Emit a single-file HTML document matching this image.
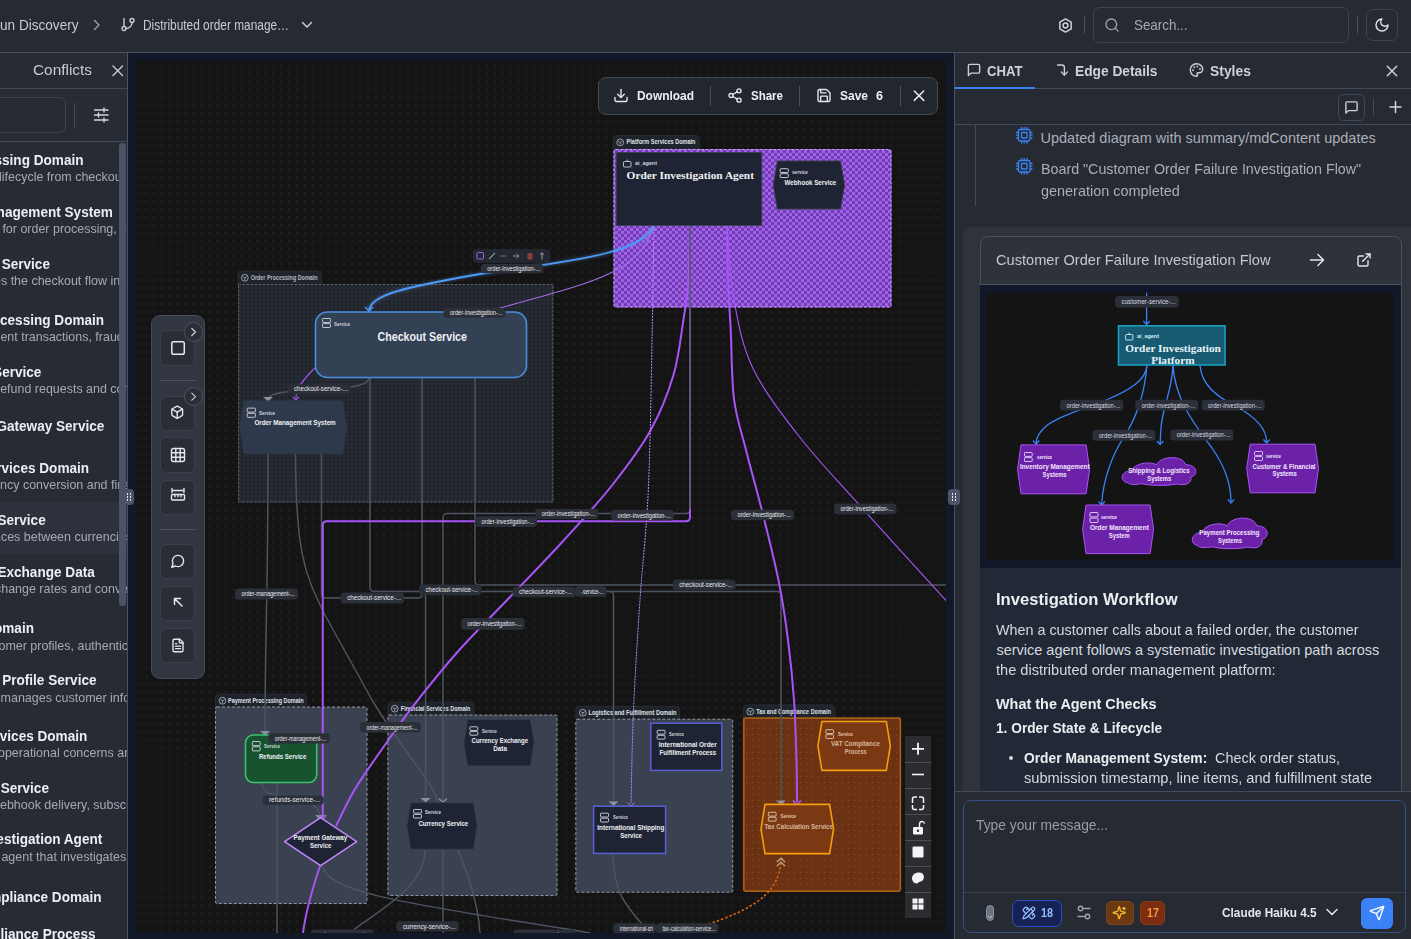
<!DOCTYPE html>
<html><head><meta charset="utf-8"><title>Canvas</title>
<style>*{box-sizing:border-box;margin:0;padding:0}
html,body{width:1411px;height:939px;overflow:hidden;background:#262a33;font-family:"Liberation Sans",sans-serif;color:#d1d5db}
.abs{position:absolute}
.t{position:absolute;white-space:nowrap;line-height:1;transform-origin:0 0}
#top{left:0;top:0;width:1411px;height:53px;background:#262a33;border-bottom:1px solid #4a5262}
#left{left:0;top:53px;width:128px;height:886px;background:#272b34;border-right:1px solid #4a5262;overflow:hidden}
#lefti{left:0;top:-53px;width:128px;height:939px}
#navy{left:128px;top:53px;width:826px;height:886px;background:#111827}
#canvas{left:136px;top:61px;width:810px;height:872px;background:#141414;overflow:hidden}
#canvi{left:-136px;top:-61px;width:1411px;height:939px}
#right{left:954px;top:53px;width:457px;height:886px;background:#262a33;border-left:1px solid #4a5262;overflow:hidden}
#righti{left:-955px;top:-53px;width:1411px;height:939px}
</style></head><body>
<div id="top" class="abs">
<div class="t" style="left:-0.50px;top:18.02px;font-size:14.5px;font-weight:400;color:#c7cbd3;font-family:'Liberation Sans',sans-serif;transform:scaleX(0.9366);">un Discovery</div>
<svg class="abs" style="left:0;top:0" width="1411" height="53" viewBox="0 0 1411 53" fill="none" stroke-linecap="round" stroke-linejoin="round">
<polyline points="94.5,20.5 99,25 94.5,29.5" stroke="#9ca3af" stroke-width="1.4"/>
<g transform="translate(120,16.5) scale(0.6667)" stroke="#c7cbd3" stroke-width="2.1"><line x1="6" x2="6" y1="3" y2="15"/><circle cx="18" cy="6" r="3"/><circle cx="6" cy="18" r="3"/><path d="M18 9a9 9 0 0 1-9 9"/></g>
<polyline points="302.5,22.5 307,27 311.5,22.5" stroke="#c7cbd3" stroke-width="1.5"/>
<g transform="translate(1057.5,17.5) scale(0.6667)" stroke="#d1d5db" stroke-width="2.2"><path d="M12 2.2 20.5 7.1v9.8L12 21.8 3.5 16.9V7.1z"/><circle cx="12" cy="12" r="3.6"/></g>
<line x1="1084.5" y1="17" x2="1084.5" y2="33" stroke="#4a5262" stroke-width="1"/>
<rect x="1093.5" y="7.5" width="255" height="35" rx="6" stroke="#3e4451" stroke-width="1"/>
<g transform="translate(1104,17) scale(0.6667)" stroke="#9ca3af" stroke-width="2"><circle cx="11" cy="11" r="8"/><path d="m21 21-4.3-4.3"/></g>
<line x1="1357.5" y1="17" x2="1357.5" y2="33" stroke="#4a5262" stroke-width="1"/>
<rect x="1366.5" y="9.5" width="31" height="31" rx="6" stroke="#3e4451" stroke-width="1"/>
<g transform="translate(1374,17) scale(0.6667)" stroke="#e5e7eb" stroke-width="2.1"><path d="M12 3a6 6 0 0 0 9 9 9 9 0 1 1-9-9Z"/></g>
</svg>
<div class="t" style="left:143.00px;top:18.02px;font-size:14.5px;font-weight:400;color:#c7cbd3;font-family:'Liberation Sans',sans-serif;transform:scaleX(0.8196);">Distributed order manage…</div>
<div class="t" style="left:1134.00px;top:18.22px;font-size:14.5px;font-weight:400;color:#a3a9b3;font-family:'Liberation Sans',sans-serif;transform:scaleX(0.9224);">Search...</div>
</div>
<div id="left" class="abs"><div id="lefti" class="abs">
<div class="t" style="left:33.00px;top:63.02px;font-size:14.5px;font-weight:400;color:#c7cbd3;font-family:'Liberation Sans',sans-serif;transform:scaleX(1.0610);">Conflicts</div>
<svg class="abs" style="left:0;top:0" width="128" height="939" fill="none" stroke-linecap="round" stroke-linejoin="round">
<path d="M113 66 L122.5 75.5 M122.5 66 L113 75.5" stroke="#c7cbd3" stroke-width="1.4"/>
<line x1="0" y1="88.5" x2="127" y2="88.5" stroke="#434a57" stroke-width="1"/>
<rect x="-20.5" y="97.5" width="86" height="35" rx="6" stroke="#3e4451" stroke-width="1"/>
<line x1="74.5" y1="103" x2="74.5" y2="127" stroke="#434a57" stroke-width="1"/>
<g stroke="#d1d5db" stroke-width="1.4">
<line x1="94.5" y1="110" x2="108" y2="110"/><line x1="94.5" y1="115" x2="108" y2="115"/><line x1="94.5" y1="120" x2="108" y2="120"/>
<line x1="104" y1="108" x2="104" y2="112"/><line x1="98.5" y1="113" x2="98.5" y2="117"/><line x1="104" y1="118" x2="104" y2="122"/>
</g>
<line x1="0" y1="141.5" x2="127" y2="141.5" stroke="#434a57" stroke-width="1"/>
</svg>
<div class="abs" style="left:0;top:502px;width:127px;height:52px;background:#2d313b"></div>
<div class="t" style="left:-84.01px;top:153.35px;font-size:14px;font-weight:700;color:#eceef1;font-family:'Liberation Sans',sans-serif;transform:scaleX(0.9700);">Order Processing Domain</div>
<div class="t" style="left:-1.00px;top:171.37px;font-size:12.2px;font-weight:400;color:#a4aab4;font-family:'Liberation Sans',sans-serif;transform:scaleX(1.0230);">lifecycle from checkout flow</div>
<div class="t" style="left:-62.86px;top:205.15px;font-size:14px;font-weight:700;color:#eceef1;font-family:'Liberation Sans',sans-serif;transform:scaleX(0.9700);">Order Management System</div>
<div class="t" style="left:-8.00px;top:223.37px;font-size:12.2px;font-weight:400;color:#a4aab4;font-family:'Liberation Sans',sans-serif;transform:scaleX(1.0230);">e for order processing, status</div>
<div class="t" style="left:-64.00px;top:257.15px;font-size:14px;font-weight:700;color:#eceef1;font-family:'Liberation Sans',sans-serif;transform:scaleX(0.9700);">Checkout Service</div>
<div class="t" style="left:-6.50px;top:275.37px;font-size:12.2px;font-weight:400;color:#a4aab4;font-family:'Liberation Sans',sans-serif;transform:scaleX(1.0230);">es the checkout flow including</div>
<div class="t" style="left:-83.20px;top:313.35px;font-size:14px;font-weight:700;color:#eceef1;font-family:'Liberation Sans',sans-serif;transform:scaleX(0.9700);">Payment Processing Domain</div>
<div class="t" style="left:-10.00px;top:331.37px;font-size:12.2px;font-weight:400;color:#a4aab4;font-family:'Liberation Sans',sans-serif;transform:scaleX(1.0230);">ment transactions, fraud detection</div>
<div class="t" style="left:-64.90px;top:365.15px;font-size:14px;font-weight:700;color:#eceef1;font-family:'Liberation Sans',sans-serif;transform:scaleX(0.9700);">Refunds Service</div>
<div class="t" style="left:-4.00px;top:383.37px;font-size:12.2px;font-weight:400;color:#a4aab4;font-family:'Liberation Sans',sans-serif;transform:scaleX(1.0230);">refund requests and compensation</div>
<div class="t" style="left:-63.82px;top:419.35px;font-size:14px;font-weight:700;color:#eceef1;font-family:'Liberation Sans',sans-serif;transform:scaleX(0.9700);">Payment Gateway Service</div>
<div class="t" style="left:-83.06px;top:460.95px;font-size:14px;font-weight:700;color:#eceef1;font-family:'Liberation Sans',sans-serif;transform:scaleX(0.9700);">Financial Services Domain</div>
<div class="t" style="left:-10.70px;top:479.47px;font-size:12.2px;font-weight:400;color:#a4aab4;font-family:'Liberation Sans',sans-serif;transform:scaleX(1.0230);">rency conversion and financial</div>
<div class="t" style="left:-65.70px;top:512.85px;font-size:14px;font-weight:700;color:#eceef1;font-family:'Liberation Sans',sans-serif;transform:scaleX(0.9700);">Currency Service</div>
<div class="t" style="left:-6.00px;top:531.07px;font-size:12.2px;font-weight:400;color:#a4aab4;font-family:'Liberation Sans',sans-serif;transform:scaleX(1.0230);">nces between currencies</div>
<div class="t" style="left:-65.86px;top:564.85px;font-size:14px;font-weight:700;color:#eceef1;font-family:'Liberation Sans',sans-serif;transform:scaleX(0.9700);">Currency Exchange Data</div>
<div class="t" style="left:-5.50px;top:583.07px;font-size:12.2px;font-weight:400;color:#a4aab4;font-family:'Liberation Sans',sans-serif;transform:scaleX(1.0230);">change rates and conversion</div>
<div class="t" style="left:-82.92px;top:621.15px;font-size:14px;font-weight:700;color:#eceef1;font-family:'Liberation Sans',sans-serif;transform:scaleX(0.9700);">Customer Domain</div>
<div class="t" style="left:-5.50px;top:639.67px;font-size:12.2px;font-weight:400;color:#a4aab4;font-family:'Liberation Sans',sans-serif;transform:scaleX(1.0230);">tomer profiles, authentication</div>
<div class="t" style="left:-64.53px;top:673.15px;font-size:14px;font-weight:700;color:#eceef1;font-family:'Liberation Sans',sans-serif;transform:scaleX(0.9700);">Customer Profile Service</div>
<div class="t" style="left:-7.50px;top:691.67px;font-size:12.2px;font-weight:400;color:#a4aab4;font-family:'Liberation Sans',sans-serif;transform:scaleX(1.0230);">r manages customer information</div>
<div class="t" style="left:-81.32px;top:728.95px;font-size:14px;font-weight:700;color:#eceef1;font-family:'Liberation Sans',sans-serif;transform:scaleX(0.9700);">Platform Services Domain</div>
<div class="t" style="left:-2.00px;top:747.07px;font-size:12.2px;font-weight:400;color:#a4aab4;font-family:'Liberation Sans',sans-serif;transform:scaleX(1.0230);">operational concerns and</div>
<div class="t" style="left:-64.39px;top:780.65px;font-size:14px;font-weight:700;color:#eceef1;font-family:'Liberation Sans',sans-serif;transform:scaleX(0.9700);">Webhook Service</div>
<div class="t" style="left:-8.64px;top:799.27px;font-size:12.2px;font-weight:400;color:#a4aab4;font-family:'Liberation Sans',sans-serif;transform:scaleX(1.0230);">webhook delivery, subscriptions</div>
<div class="t" style="left:-64.22px;top:832.35px;font-size:14px;font-weight:700;color:#eceef1;font-family:'Liberation Sans',sans-serif;transform:scaleX(0.9700);">Order Investigation Agent</div>
<div class="t" style="left:-9.00px;top:851.17px;font-size:12.2px;font-weight:400;color:#a4aab4;font-family:'Liberation Sans',sans-serif;transform:scaleX(1.0230);">n agent that investigates</div>
<div class="t" style="left:-82.62px;top:890.45px;font-size:14px;font-weight:700;color:#eceef1;font-family:'Liberation Sans',sans-serif;transform:scaleX(0.9700);">Tax and Compliance Domain</div>
<div class="t" style="left:-67.48px;top:926.65px;font-size:14px;font-weight:700;color:#eceef1;font-family:'Liberation Sans',sans-serif;transform:scaleX(0.9700);">VAT Compliance Process</div>
<div class="abs" style="left:119px;top:143px;width:7px;height:463px;border-radius:4px;background:#4b5466"></div>
</div></div>
<div id="navy" class="abs"></div>
<div id="canvas" class="abs"><div id="canvi" class="abs">
<svg class="abs" style="left:0;top:0" width="1411" height="939" viewBox="0 0 1411 939">
<defs>
<pattern id="dots" width="7.92" height="7.92" patternUnits="userSpaceOnUse" x="134.54" y="62.54"><circle cx="3.96" cy="3.96" r="0.75" fill="#333333"/></pattern>
<pattern id="ddots" width="4" height="4" patternUnits="userSpaceOnUse"><rect x="1" y="1" width="1.4" height="1.4" fill="#15181e"/></pattern>
<pattern id="odots" width="6" height="6" patternUnits="userSpaceOnUse"><rect x="2" y="2" width="1" height="1" fill="#8a5530"/></pattern>
<pattern id="chk" width="6" height="6" patternUnits="userSpaceOnUse"><rect width="6" height="6" fill="#7836c6"/><rect width="3" height="3" fill="#9a68d4"/><rect x="3" y="3" width="3" height="3" fill="#9a68d4"/></pattern>
<filter id="glow" x="-20%" y="-20%" width="140%" height="140%"><feGaussianBlur stdDeviation="1.5"/></filter>
</defs>
<rect x="136" y="61" width="810" height="872" fill="url(#dots)"/>

<path d="M237.8,284.5 V275 Q237.8,271 241.8,271 H317.4 Q321.4,271 321.4,275 V284.5 Z" fill="#1f232b" stroke="#2c313a" stroke-width="0.8"/><g stroke="#b8bcc4" stroke-width="0.8" fill="none"><circle cx="244.8" cy="277.8" r="3.4"/><path d="M242.8,276.8 L244.8,277.8 L246.8,276.8 M244.8,277.8 V279.9"/></g><text transform="translate(250.70,279.60) scale(0.8230,1)" font-family="Liberation Sans" font-size="6.6" font-weight="700" fill="#b3b7be" >Order Processing Domain</text>
<rect x="238" y="284" width="315.4" height="218.4" fill="#262a33"/><rect x="238" y="284" width="315.4" height="218.4" fill="url(#ddots)"/>
<rect x="238.5" y="284.5" width="314.4" height="217.4" fill="none" stroke="#6b7280" stroke-width="0.8" stroke-dasharray="2.5 1.5"/>
<path d="M613.2,149.2 V139.6 Q613.2,135.6 617.2,135.6 H695.3 Q699.3,135.6 699.3,139.6 V149.2 Z" fill="#1f232b" stroke="#2c313a" stroke-width="0.8"/><g stroke="#b8bcc4" stroke-width="0.8" fill="none"><circle cx="620.2" cy="142.4" r="3.4"/><path d="M618.2,141.4 L620.2,142.4 L622.2,141.4 M620.2,142.4 V144.6"/></g><text transform="translate(626.60,143.90) scale(0.8447,1)" font-family="Liberation Sans" font-size="6.6" font-weight="700" fill="#dfe2e6" >Platform Services Domain</text>
<rect x="613.5" y="149" width="278" height="158.4" rx="2" fill="url(#chk)"/>
<rect x="614" y="149.5" width="277" height="157.4" rx="2" fill="none" stroke="#c9a2f2" stroke-width="1" stroke-dasharray="2.5 2"/>
<path d="M215.5,707.2 V698.2 Q215.5,694.2 219.5,694.2 H302.8 Q306.8,694.2 306.8,698.2 V707.2 Z" fill="#1f232b" stroke="#2c313a" stroke-width="0.8"/><g stroke="#b8bcc4" stroke-width="0.8" fill="none"><circle cx="222.5" cy="700.7" r="3.4"/><path d="M220.5,699.7 L222.5,700.7 L224.5,699.7 M222.5,700.7 V702.9"/></g><text transform="translate(228.00,703.10) scale(0.8331,1)" font-family="Liberation Sans" font-size="6.6" font-weight="700" fill="#dfe2e6" >Payment Processing Domain</text>
<rect x="215.5" y="707" width="151.5" height="196.5" rx="1.5" fill="#3a4251" stroke="#c6cad1" stroke-width="0.8" stroke-dasharray="3 2" stroke-opacity="0.85"/>
<path d="M387.8,715.2 V706.2 Q387.8,702.2 391.8,702.2 H469.9 Q473.9,702.2 473.9,706.2 V715.2 Z" fill="#1f232b" stroke="#2c313a" stroke-width="0.8"/><g stroke="#b8bcc4" stroke-width="0.8" fill="none"><circle cx="394.8" cy="708.7" r="3.4"/><path d="M392.8,707.7 L394.8,708.7 L396.8,707.7 M394.8,708.7 V710.9"/></g><text transform="translate(400.80,711.30) scale(0.8335,1)" font-family="Liberation Sans" font-size="6.6" font-weight="700" fill="#dfe2e6" >Financial Services Domain</text>
<rect x="387.8" y="715" width="169.2" height="180.5" rx="1.5" fill="#3a4251" stroke="#c6cad1" stroke-width="0.8" stroke-dasharray="3 2" stroke-opacity="0.85"/>
<path d="M575.8,719.2 V710.3 Q575.8,706.3 579.8,706.3 H675.7 Q679.7,706.3 679.7,710.3 V719.2 Z" fill="#1f232b" stroke="#2c313a" stroke-width="0.8"/><g stroke="#b8bcc4" stroke-width="0.8" fill="none"><circle cx="582.8" cy="712.8" r="3.4"/><path d="M580.8,711.8 L582.8,712.8 L584.8,711.8 M582.8,712.8 V715.0"/></g><text transform="translate(588.50,715.30) scale(0.8489,1)" font-family="Liberation Sans" font-size="6.6" font-weight="700" fill="#dfe2e6" >Logistics and Fulfillment Domain</text>
<rect x="575.8" y="719.2" width="156.9" height="173.1" rx="1.5" fill="#3a4251" stroke="#c6cad1" stroke-width="0.8" stroke-dasharray="3 2" stroke-opacity="0.85"/>
<path d="M743.3,718.3 V708.9 Q743.3,704.9 747.3,704.9 H830.5 Q834.5,704.9 834.5,708.9 V718.3 Z" fill="#1f232b" stroke="#2c313a" stroke-width="0.8"/><g stroke="#b8bcc4" stroke-width="0.8" fill="none"><circle cx="750.3" cy="711.6" r="3.4"/><path d="M748.3,710.6 L750.3,711.6 L752.3,710.6 M750.3,711.6 V713.8"/></g><text transform="translate(756.20,714.20) scale(0.8325,1)" font-family="Liberation Sans" font-size="6.6" font-weight="700" fill="#dfe2e6" >Tax and Compliance Domain</text>
<rect x="743.8" y="718.1" width="156.5" height="173" rx="1.5" fill="#6a3113" stroke="#a85c16" stroke-width="1.8"/>
<rect x="745" y="719.5" width="154" height="170" fill="url(#odots)"/>
<path d="M268,454 C268,600 265,640 265,731" fill="none" stroke="#4d5461" stroke-width="1.5"/>
<path d="M295.5,454 C296,560 306,575 325,615 L372,700 C405,755 432,780 438,802" fill="none" stroke="#4d5461" stroke-width="1.5"/>
<path d="M321.5,454 V594 Q321.5,598 325.5,598 H418 Q422,598 422,594 V377" fill="none" stroke="#4d5461" stroke-width="1.5"/>
<path d="M370,377 V587 Q370,591.4 374,591.4 H777 Q781,591.4 781,595.4 V802" fill="none" stroke="#4d5461" stroke-width="1.5"/>
<path d="M421.5,591.4 Q425.6,591.4 425.6,595.4 V802" fill="none" stroke="#4d5461" stroke-width="1.5"/>
<path d="M609.5,591.4 Q613.5,591.4 613.5,595.4 V802" fill="none" stroke="#4d5461" stroke-width="1.5"/>
<path d="M475,377 V581 Q475,585 479,585 H946" fill="none" stroke="#4d5461" stroke-width="1.5"/>
<path d="M690,226 V509.5 Q690,513.5 686,513.5 H447 Q443,513.5 443,517.5 V802" fill="none" stroke="#4d5461" stroke-width="1.5"/>
<path d="M369,378 C369,395 268,385 268,399" fill="none" stroke="#4d5461" stroke-width="1.5"/>
<path d="M277,783 V933" fill="none" stroke="#4d5461" stroke-width="1.5"/>
<path d="M262,783 C262,805 320,790 320,817" fill="none" stroke="#4d5461" stroke-width="1.5"/>
<path d="M322,866 C330,895 420,905 590,933" fill="none" stroke="#4d5461" stroke-width="1.5"/>
<path d="M425,850 C425,890 370,915 350,933" fill="none" stroke="#4d5461" stroke-width="1.5"/>
<path d="M443,850 V933" fill="none" stroke="#4d5461" stroke-width="1.5"/>
<path d="M458,850 C470,880 478,905 480,933" fill="none" stroke="#4d5461" stroke-width="1.5"/>
<path d="M613,854 C613,890 625,905 642,924" fill="none" stroke="#4d5461" stroke-width="1.5"/>
<path d="M690,226 V517 Q690,521.3 686,521.3 H326.8 Q322.8,521.3 322.8,525.3 V815" fill="none" stroke="#a855f7" stroke-width="2"/>
<path d="M690.0,226.0 C689.8,235.0 689.6,264.3 688.5,280.0 C687.4,295.7 685.9,304.2 683.4,320.0 C680.9,335.8 679.0,356.5 673.5,375.0 C668.0,393.5 660.5,412.5 650.2,431.0 C639.9,449.5 626.1,467.6 611.5,486.0 C596.9,504.4 579.6,523.0 562.7,541.5 C545.8,560.0 527.5,578.6 510.0,597.0 C492.5,615.4 473.8,633.6 457.5,652.0 C441.2,670.4 424.9,690.9 412.0,707.6 C399.1,724.3 389.6,738.3 380.0,752.0 C370.4,765.7 361.7,777.7 354.4,790.0 C347.1,802.3 339.1,820.0 336.0,826.0" fill="none" stroke="#a855f7" stroke-width="2"/>
<path d="M727.0,226.0 C727.2,235.0 727.4,262.7 728.0,280.0 C728.6,297.3 729.7,310.2 730.7,330.0 C731.7,349.8 731.5,379.0 734.0,399.0 C736.5,419.0 741.2,430.7 746.0,450.0 C750.8,469.3 757.5,492.5 763.0,514.6 C768.5,536.7 774.8,561.8 779.0,582.7 C783.2,603.6 785.5,620.5 788.0,640.0 C790.5,659.5 792.6,680.0 794.0,700.0 C795.4,720.0 796.0,743.0 796.5,760.0 C797.0,777.0 796.9,795.0 797.0,802.0" fill="none" stroke="#a855f7" stroke-width="2"/>
<path d="M320,866 C312,890 306,910 303,933" fill="none" stroke="#a855f7" stroke-width="2"/>
<path d="M654.0,226.0 C653.7,241.7 653.3,276.7 652.4,320.0 C651.5,363.3 650.5,439.8 648.5,486.0 C646.5,532.2 642.7,560.1 640.2,597.0 C637.7,633.9 635.1,673.3 633.6,707.6 C632.1,741.9 631.4,787.1 631.0,803.0" fill="none" stroke="#b98af0" stroke-width="1" stroke-dasharray="2 1"/>
<path d="M727.0,226.0 C728.2,238.3 729.7,276.3 734.0,300.0 C738.3,323.7 742.0,345.3 752.8,368.0 C763.6,390.7 781.2,413.3 798.8,436.0 C816.4,458.7 834.0,476.7 858.4,504.0 C882.8,531.3 929.9,582.9 945.2,599.7 C960.5,616.5 949.2,604.1 950.0,605.0" fill="none" stroke="#a855f7" stroke-width="1.1"/>
<path d="M653,228 C640,275 580,285 497,309" fill="none" stroke="#a46ee6" stroke-width="1.1"/>
<path d="M316,367 C302,380 296,390 296,398" fill="none" stroke="#a855f7" stroke-width="1.1"/>
<path d="M293,397 L296,400 L299,397" fill="none" stroke="#a855f7" stroke-width="1.1"/>
<path d="M690,226 V509.5" fill="none" stroke="#4d5461" stroke-width="1.5"/>
<path d="M654,226 C640,250 600,258 480,274 C400,288 372,295 369,310" fill="none" stroke="#60a5fa" stroke-width="3" opacity="0.35" filter="url(#glow)"/>
<path d="M654,226 C640,250 600,258 480,274 C400,288 372,295 369,310" fill="none" stroke="#4d9bf8" stroke-width="1.8"/>
<path d="M365,307 L369,311 L373,307" fill="none" stroke="#4d9bf8" stroke-width="1.5"/>
<path d="M781,858 C781,900 740,915 680,933" fill="none" stroke="#d9650f" stroke-width="1.6" stroke-dasharray="2.5 2"/>
<path d="M777,862 L781,858 L785,862 M777,866 L781,862 L785,866" fill="none" stroke="#c2a890" stroke-width="1.2"/>
<path d="M260,731.0 L270,731.0 L265,735.5 Z" fill="#8b919c"/>
<path d="M263,397.0 L273,397.0 L268,401.5 Z" fill="#8b919c"/>
<path d="M420.6,798.0 L430.6,798.0 L425.6,802.5 Z" fill="#8b919c"/>
<path d="M439,798.5 L443,802.5 L447,798.5" fill="none" stroke="#8b919c" stroke-width="1.2"/>
<path d="M608.5,801.5 L618.5,801.5 L613.5,806 Z" fill="#8b919c"/>
<path d="M627.5,802.5 L631,806 L634.5,802.5" fill="none" stroke="#b57af5" stroke-width="1"/>
<path d="M776,800.5 L786,800.5 L781,805 Z" fill="#8b919c"/>
<path d="M793,800.5 L797,805 L801,800.5" fill="none" stroke="#a855f7" stroke-width="1.8"/>
<path d="M315,815 L325,815 L320,820 Z" fill="#8b919c"/>
<path d="M319.3,815 L322.8,819 L326.3,815" fill="none" stroke="#a855f7" stroke-width="1.6"/>
<rect x="473.3" y="249.7" width="76.4" height="12.6" rx="3" fill="#23272f" stroke="#30353f" stroke-width="0.6"/>
<rect x="477" y="252.5" width="6.5" height="6.5" rx="1.2" fill="none" stroke="#a066e8" stroke-width="1"/>
<path d="M489,259 L495,253" stroke="#8a9099" stroke-width="1.2"/>
<g fill="#8a9099"><circle cx="501" cy="256" r="0.7"/><circle cx="503.2" cy="256" r="0.7"/><circle cx="505.4" cy="256" r="0.7"/></g>
<path d="M513,256 H519 M516.5,253.5 L519,256 L516.5,258.5" fill="none" stroke="#8a9099" stroke-width="1"/>
<rect x="527.5" y="253" width="5" height="6.5" rx="0.8" fill="#8f3a3a"/>
<path d="M542,252.5 V259.5 M540,254 H544" stroke="#8a9099" stroke-width="1.2"/>
<rect x="616.2" y="152.5" width="145.6" height="73" fill="#1e2433" stroke="#3a4150" stroke-width="1"/>
<g fill="none" stroke="#cfd3da" stroke-width="0.9"><rect x="623.5" y="161.5" width="7.5" height="5.5" rx="1"/><path d="M627.2,161.5 V159.5 M625.5,164.3 h0.1 M629,164.3 h0.1"/></g>
<text transform="translate(635.00,165.40) scale(0.9688,1)" font-family="Liberation Sans" font-size="5.6" font-weight="700" fill="#d1d5db" >ai_agent</text>
<text transform="translate(626.60,179.20) scale(1.0544,1)" font-family="Liberation Serif" font-size="10.8" font-weight="700" fill="#eef0f3" >Order Investigation Agent</text>
<polygon points="773.3,185.0 777.3,161 840.5,161 844.5,185.0 840.5,209 777.3,209" fill="#1e2433" stroke="#363d4a" stroke-width="1" stroke-linejoin="round"/>
<g fill="none" stroke="#d1d5db" stroke-width="0.9"><rect x="780.2" y="168.7" width="8.1" height="3.8" rx="0.7"/><rect x="780.2" y="173.7" width="8.1" height="3.8" rx="0.7"/></g>
<text transform="translate(792.00,174.30) scale(0.8282,1)" font-family="Liberation Sans" font-size="5.6" font-weight="700" fill="#d1d5db" >service</text>
<text transform="translate(784.60,185.20) scale(0.9433,1)" font-family="Liberation Sans" font-size="6.6" font-weight="700" fill="#eef0f3" >Webhook Service</text>
<rect x="315.5" y="312" width="211" height="65.5" rx="12" fill="#334155" stroke="#4a90e2" stroke-width="1.6"/>
<g fill="none" stroke="#d1d5db" stroke-width="0.9"><rect x="322.5" y="318.5" width="8.0" height="3.9" rx="0.7"/><rect x="322.5" y="323.6" width="8.0" height="3.9" rx="0.7"/></g>
<text transform="translate(334.00,325.80) scale(0.8026,1)" font-family="Liberation Sans" font-size="5.6" font-weight="700" fill="#d1d5db" >Service</text>
<text transform="translate(377.50,341.20) scale(0.8538,1)" font-family="Liberation Sans" font-size="12.5" font-weight="700" fill="#eef0f3" >Checkout Service</text>
<polygon points="240,427.3 244,401 342.5,401 346.5,427.3 342.5,453.6 244,453.6" fill="#2e3a4c" stroke="#2e3a4c" stroke-width="1" stroke-linejoin="round"/>
<g fill="none" stroke="#d1d5db" stroke-width="0.9"><rect x="247.2" y="408.1" width="8.2" height="4.0" rx="0.7"/><rect x="247.2" y="413.3" width="8.2" height="4.0" rx="0.7"/></g>
<text transform="translate(259.00,414.50) scale(0.8026,1)" font-family="Liberation Sans" font-size="5.6" font-weight="700" fill="#d1d5db" >Service</text>
<text transform="translate(254.40,424.80) scale(0.9524,1)" font-family="Liberation Sans" font-size="6.6" font-weight="700" fill="#eef0f3" >Order Management System</text>
<rect x="245.5" y="735" width="71.2" height="47.5" rx="8" fill="#185330" stroke="#3ec46d" stroke-width="1.5"/>
<g fill="none" stroke="#d1d5db" stroke-width="0.9"><rect x="252.3" y="741.5" width="7.9" height="4.1" rx="0.7"/><rect x="252.3" y="746.8" width="7.9" height="4.1" rx="0.7"/></g>
<text transform="translate(264.00,748.00) scale(0.8026,1)" font-family="Liberation Sans" font-size="5.6" font-weight="700" fill="#d1d5db" >Service</text>
<text transform="translate(258.90,759.00) scale(0.9186,1)" font-family="Liberation Sans" font-size="6.6" font-weight="700" fill="#eef0f3" >Refunds Service</text>
<polygon points="284.6,841.6 320.6,817.6 356.7,841.6 320.6,865.6" fill="#1e2433" stroke="#c084fc" stroke-width="1.6" stroke-linejoin="round"/>
<text transform="translate(293.50,839.80) scale(0.9540,1)" font-family="Liberation Sans" font-size="6.6" font-weight="700" fill="#eef0f3" >Payment Gateway</text>
<text transform="translate(309.90,847.60) scale(0.9150,1)" font-family="Liberation Sans" font-size="6.6" font-weight="700" fill="#eef0f3" >Service</text>
<polygon points="463.8,742.8 467.5,719.6 530.5,719.6 534.2,742.8 530.5,766 467.5,766" fill="#1e2433" stroke="#363d4a" stroke-width="1" stroke-linejoin="round"/>
<g fill="none" stroke="#d1d5db" stroke-width="0.9"><rect x="469.9" y="726.8" width="7.9" height="3.6" rx="0.7"/><rect x="469.9" y="731.6" width="7.9" height="3.6" rx="0.7"/></g>
<text transform="translate(482.00,733.00) scale(0.7524,1)" font-family="Liberation Sans" font-size="5.6" font-weight="700" fill="#d1d5db" >Service</text>
<text transform="translate(471.60,743.00) scale(0.9128,1)" font-family="Liberation Sans" font-size="6.6" font-weight="700" fill="#eef0f3" >Currency Exchange</text>
<text transform="translate(493.30,750.90) scale(0.9544,1)" font-family="Liberation Sans" font-size="6.6" font-weight="700" fill="#eef0f3" >Data</text>
<polygon points="406.8,825.95 410.5,802.7 473.5,802.7 477.2,825.95 473.5,849.2 410.5,849.2" fill="#1e2433" stroke="#363d4a" stroke-width="1" stroke-linejoin="round"/>
<g fill="none" stroke="#d1d5db" stroke-width="0.9"><rect x="413.5" y="809.5" width="8.0" height="3.6" rx="0.7"/><rect x="413.5" y="814.4" width="8.0" height="3.6" rx="0.7"/></g>
<text transform="translate(425.00,814.00) scale(0.8026,1)" font-family="Liberation Sans" font-size="5.6" font-weight="700" fill="#d1d5db" >Service</text>
<text transform="translate(418.40,825.80) scale(0.9192,1)" font-family="Liberation Sans" font-size="6.6" font-weight="700" fill="#eef0f3" >Currency Service</text>
<rect x="650.8" y="723.2" width="71" height="47.2" fill="#1e2433" stroke="#5b5fd6" stroke-width="1.5"/>
<g fill="none" stroke="#d1d5db" stroke-width="0.9"><rect x="657.2" y="730.3" width="7.8" height="3.8" rx="0.7"/><rect x="657.2" y="735.3" width="7.8" height="3.8" rx="0.7"/></g>
<text transform="translate(669.00,736.00) scale(0.7524,1)" font-family="Liberation Sans" font-size="5.6" font-weight="700" fill="#d1d5db" >Service</text>
<text transform="translate(658.70,747.20) scale(0.9764,1)" font-family="Liberation Sans" font-size="6.6" font-weight="700" fill="#eef0f3" >International Order</text>
<text transform="translate(659.50,755.20) scale(0.9313,1)" font-family="Liberation Sans" font-size="6.6" font-weight="700" fill="#eef0f3" >Fulfillment Process</text>
<rect x="593.6" y="806.2" width="72" height="47.2" fill="#1e2433" stroke="#5b5fd6" stroke-width="1.5"/>
<g fill="none" stroke="#d1d5db" stroke-width="0.9"><rect x="600.5" y="813.2" width="8.0" height="3.8" rx="0.7"/><rect x="600.5" y="818.2" width="8.0" height="3.8" rx="0.7"/></g>
<text transform="translate(613.00,819.00) scale(0.7524,1)" font-family="Liberation Sans" font-size="5.6" font-weight="700" fill="#d1d5db" >Service</text>
<text transform="translate(597.30,830.00) scale(0.9646,1)" font-family="Liberation Sans" font-size="6.6" font-weight="700" fill="#eef0f3" >International Shipping</text>
<text transform="translate(620.30,838.10) scale(0.9236,1)" font-family="Liberation Sans" font-size="6.6" font-weight="700" fill="#eef0f3" >Service</text>
<polygon points="817.9,745.95 821.9,721.5 886.3,721.5 890.3,745.95 886.3,770.4 821.9,770.4" fill="#7a3912" stroke="#f59e0b" stroke-width="1.6" stroke-linejoin="round"/>
<g fill="none" stroke="#e0c8b0" stroke-width="0.9"><rect x="825.8" y="729.7" width="7.7" height="3.8" rx="0.7"/><rect x="825.8" y="734.7" width="7.7" height="3.8" rx="0.7"/></g>
<text transform="translate(838.00,735.50) scale(0.7524,1)" font-family="Liberation Sans" font-size="5.6" font-weight="700" fill="#e0c8b0" >Service</text>
<text transform="translate(830.90,745.80) scale(0.9538,1)" font-family="Liberation Sans" font-size="6.6" font-weight="700" fill="#d7b79c" >VAT Compliance</text>
<text transform="translate(844.70,753.50) scale(0.8608,1)" font-family="Liberation Sans" font-size="6.6" font-weight="700" fill="#d7b79c" >Process</text>
<polygon points="761,829.0 765,804.4 829.6,804.4 833.6,829.0 829.6,853.6 765,853.6" fill="#7a3912" stroke="#f59e0b" stroke-width="1.6" stroke-linejoin="round"/>
<g fill="none" stroke="#e0c8b0" stroke-width="0.9"><rect x="768.3" y="812.3" width="7.8" height="3.8" rx="0.7"/><rect x="768.3" y="817.3" width="7.8" height="3.8" rx="0.7"/></g>
<text transform="translate(780.60,818.00) scale(0.7725,1)" font-family="Liberation Sans" font-size="5.6" font-weight="700" fill="#e0c8b0" >Service</text>
<text transform="translate(764.50,828.70) scale(0.9304,1)" font-family="Liberation Sans" font-size="6.6" font-weight="700" fill="#d7b79c" >Tax Calculation Service</text>
<rect x="480.7" y="263.9" width="62.8" height="9.4" rx="3.5" fill="#2b2f38"/><text transform="translate(487.20,270.90) scale(0.8596,1)" font-family="Liberation Sans" font-size="6.6" font-weight="400" fill="#e8eaee" >order-investigation-...</text><rect x="443.5" y="308" width="62.0" height="9.8" rx="3.5" fill="#2b2f38"/><text transform="translate(450.00,315.20) scale(0.8467,1)" font-family="Liberation Sans" font-size="6.6" font-weight="400" fill="#e8eaee" >order-investigation-...</text><rect x="287.5" y="384.3" width="63.2" height="9.7" rx="3.5" fill="#2b2f38"/><text transform="translate(294.00,391.45) scale(0.9385,1)" font-family="Liberation Sans" font-size="6.6" font-weight="400" fill="#e8eaee" >checkout-service-...</text><rect x="535.3" y="509" width="63.1" height="10.0" rx="3.5" fill="#2b2f38"/><text transform="translate(541.80,516.30) scale(0.8644,1)" font-family="Liberation Sans" font-size="6.6" font-weight="400" fill="#e8eaee" >order-investigation-...</text><rect x="475" y="516.2" width="62.0" height="10.8" rx="3.5" fill="#2b2f38"/><text transform="translate(481.50,523.90) scale(0.8467,1)" font-family="Liberation Sans" font-size="6.6" font-weight="400" fill="#e8eaee" >order-investigation-...</text><rect x="611" y="510" width="63.0" height="10.6" rx="3.5" fill="#2b2f38"/><text transform="translate(617.50,517.60) scale(0.8628,1)" font-family="Liberation Sans" font-size="6.6" font-weight="400" fill="#e8eaee" >order-investigation-...</text><rect x="731" y="509.7" width="63.0" height="10.5" rx="3.5" fill="#2b2f38"/><text transform="translate(737.50,517.25) scale(0.8628,1)" font-family="Liberation Sans" font-size="6.6" font-weight="400" fill="#e8eaee" >order-investigation-...</text><rect x="833.9" y="503.6" width="62.6" height="10.6" rx="3.5" fill="#2b2f38"/><text transform="translate(840.40,511.20) scale(0.8564,1)" font-family="Liberation Sans" font-size="6.6" font-weight="400" fill="#e8eaee" >order-investigation-...</text><rect x="235" y="588.4" width="63.0" height="11.2" rx="3.5" fill="#2b2f38"/><text transform="translate(241.50,596.30) scale(0.8383,1)" font-family="Liberation Sans" font-size="6.6" font-weight="400" fill="#e8eaee" >order-management-...</text><rect x="340.7" y="592.5" width="63.3" height="11.1" rx="3.5" fill="#2b2f38"/><text transform="translate(347.20,600.35) scale(0.9402,1)" font-family="Liberation Sans" font-size="6.6" font-weight="400" fill="#e8eaee" >checkout-service-...</text><rect x="419" y="584.6" width="62.3" height="10.7" rx="3.5" fill="#2b2f38"/><text transform="translate(425.50,592.25) scale(0.9227,1)" font-family="Liberation Sans" font-size="6.6" font-weight="400" fill="#e8eaee" >checkout-service-...</text><rect x="512.6" y="586.8" width="62.6" height="10.5" rx="3.5" fill="#2b2f38"/><text transform="translate(519.10,594.35) scale(0.9280,1)" font-family="Liberation Sans" font-size="6.6" font-weight="400" fill="#e8eaee" >checkout-service-...</text><rect x="575" y="586.3" width="31.7" height="10.5" rx="3.5" fill="#2b2f38"/><text transform="translate(581.50,593.85) scale(0.7210,1)" font-family="Liberation Sans" font-size="6.6" font-weight="400" fill="#e8eaee" >-service-...</text><rect x="672.7" y="579.5" width="62.9" height="10.7" rx="3.5" fill="#2b2f38"/><text transform="translate(679.20,587.15) scale(0.9332,1)" font-family="Liberation Sans" font-size="6.6" font-weight="400" fill="#e8eaee" >checkout-service-...</text><rect x="461" y="618.1" width="63.5" height="11.7" rx="3.5" fill="#2b2f38"/><text transform="translate(467.50,626.25) scale(0.8709,1)" font-family="Liberation Sans" font-size="6.6" font-weight="400" fill="#e8eaee" >order-investigation-...</text><rect x="268.2" y="733.3" width="61.4" height="10.1" rx="3.5" fill="#2b2f38"/><text transform="translate(274.70,740.65) scale(0.8132,1)" font-family="Liberation Sans" font-size="6.6" font-weight="400" fill="#e8eaee" >order-management-...</text><rect x="262.4" y="795.4" width="61.3" height="9.3" rx="3.5" fill="#2b2f38"/><text transform="translate(268.90,802.35) scale(0.9804,1)" font-family="Liberation Sans" font-size="6.6" font-weight="400" fill="#e8eaee" >refunds-service-...</text><rect x="360" y="722" width="60.7" height="10.6" rx="3.5" fill="#2b2f38"/><text transform="translate(366.50,729.60) scale(0.8022,1)" font-family="Liberation Sans" font-size="6.6" font-weight="400" fill="#e8eaee" >order-management-...</text><rect x="396.4" y="921.3" width="62.3" height="10.2" rx="3.5" fill="#2b2f38"/><text transform="translate(402.90,928.70) scale(0.9412,1)" font-family="Liberation Sans" font-size="6.6" font-weight="400" fill="#e8eaee" >currency-service-...</text><rect x="311" y="929.5" width="62.7" height="10.5" rx="3.5" fill="#2b2f38"/><text transform="translate(317.50,937.05) scale(0.8336,1)" font-family="Liberation Sans" font-size="6.6" font-weight="400" fill="#e8eaee" >order-management-...</text><rect x="513" y="929.5" width="62.6" height="10.5" rx="3.5" fill="#2b2f38"/><text transform="translate(519.50,937.05) scale(0.9465,1)" font-family="Liberation Sans" font-size="6.6" font-weight="400" fill="#e8eaee" >currency-service-...</text><rect x="613.3" y="923.2" width="42.7" height="10.3" rx="3.5" fill="#2b2f38"/><text transform="translate(619.80,930.65) scale(0.7354,1)" font-family="Liberation Sans" font-size="6.6" font-weight="400" fill="#e8eaee" >international-sh</text><rect x="656" y="923.2" width="62.4" height="10.3" rx="3.5" fill="#2b2f38"/><text transform="translate(662.50,930.65) scale(0.7473,1)" font-family="Liberation Sans" font-size="6.6" font-weight="400" fill="#e8eaee" >tax-calculation-service...</text>
</svg>
<div class="abs" style="left:597.5px;top:77.3px;width:340.5px;height:37.5px;border-radius:8px;background:rgba(36,40,47,0.93);border:1px solid #434a57"></div>
<svg class="abs" style="left:0;top:0" width="1411" height="939" fill="none" stroke-linecap="round" stroke-linejoin="round">
<g transform="translate(613,87.5) scale(0.667)" stroke="#e5e7eb" stroke-width="2.1"><path d="M21 15v4a2 2 0 0 1-2 2H5a2 2 0 0 1-2-2v-4"/><polyline points="7 10 12 15 17 10"/><line x1="12" x2="12" y1="15" y2="3"/></g>
<line x1="710.5" y1="86" x2="710.5" y2="106" stroke="#474e5b"/>
<g transform="translate(727,87.5) scale(0.667)" stroke="#e5e7eb" stroke-width="2.1"><circle cx="18" cy="5" r="3"/><circle cx="6" cy="12" r="3"/><circle cx="18" cy="19" r="3"/><line x1="8.59" x2="15.42" y1="13.51" y2="17.49"/><line x1="15.41" x2="8.59" y1="6.51" y2="10.49"/></g>
<line x1="799.5" y1="86" x2="799.5" y2="106" stroke="#474e5b"/>
<g transform="translate(816,87.5) scale(0.667)" stroke="#e5e7eb" stroke-width="2.1"><path d="M15.2 3a2 2 0 0 1 1.4.6l3.8 3.8a2 2 0 0 1 .6 1.4V19a2 2 0 0 1-2 2H5a2 2 0 0 1-2-2V5a2 2 0 0 1 2-2z"/><path d="M17 21v-7a1 1 0 0 0-1-1H8a1 1 0 0 0-1 1v7"/><path d="M7 3v4a1 1 0 0 0 1 1h7"/></g>
<line x1="900.5" y1="86" x2="900.5" y2="106" stroke="#474e5b"/>
<path d="M914.3,91 L923.7,100.4 M923.7,91 L914.3,100.4" stroke="#e5e7eb" stroke-width="1.5"/>
</svg>
<div class="t" style="left:637.00px;top:89.49px;font-size:13px;font-weight:700;color:#eef0f3;font-family:'Liberation Sans',sans-serif;transform:scaleX(0.9182);">Download</div>
<div class="t" style="left:751.00px;top:89.49px;font-size:13px;font-weight:700;color:#eef0f3;font-family:'Liberation Sans',sans-serif;transform:scaleX(0.8854);">Share</div>
<div class="t" style="left:840.00px;top:89.49px;font-size:13px;font-weight:700;color:#eef0f3;font-family:'Liberation Sans',sans-serif;transform:scaleX(0.9224);">Save</div>
<div class="t" style="left:876.00px;top:89.49px;font-size:13px;font-weight:700;color:#eef0f3;font-family:'Liberation Sans',sans-serif;transform:scaleX(0.9702);">6</div>
<div class="abs" style="left:151.2px;top:315.3px;width:53.8px;height:363.3px;border-radius:9px;background:#313641;border:1px solid #454c59"></div>
<div class="abs" style="left:160.3px;top:330.2px;width:35.1px;height:35.5px;border-radius:6px;background:#292d35;border:1px solid #3a404b"></div>
<div class="abs" style="left:160.3px;top:395.5px;width:35.1px;height:35.0px;border-radius:6px;background:#292d35;border:1px solid #3a404b"></div>
<div class="abs" style="left:160.3px;top:437.4px;width:35.1px;height:35.2px;border-radius:6px;background:#292d35;border:1px solid #3a404b"></div>
<div class="abs" style="left:160.3px;top:479.5px;width:35.1px;height:35.0px;border-radius:6px;background:#292d35;border:1px solid #3a404b"></div>
<div class="abs" style="left:160.3px;top:543.9px;width:35.1px;height:35.4px;border-radius:6px;background:#292d35;border:1px solid #3a404b"></div>
<div class="abs" style="left:160.3px;top:586.2px;width:35.1px;height:35.0px;border-radius:6px;background:#292d35;border:1px solid #3a404b"></div>
<div class="abs" style="left:160.3px;top:628.3px;width:35.1px;height:35.2px;border-radius:6px;background:#292d35;border:1px solid #3a404b"></div>
<div class="abs" style="left:160px;top:379.6px;width:36px;height:1px;background:#4b5261"></div>
<div class="abs" style="left:160px;top:528.6px;width:36px;height:1px;background:#4b5261"></div>
<div class="abs" style="left:184.20000000000002px;top:322.4px;width:19.2px;height:19.2px;border-radius:50%;background:#2a2e37;border:1px solid #4b5261"></div>
<div class="abs" style="left:184.20000000000002px;top:387.0px;width:19.2px;height:19.2px;border-radius:50%;background:#2a2e37;border:1px solid #4b5261"></div>
<svg class="abs" style="left:0;top:0" width="1411" height="939" fill="none" stroke-linecap="round" stroke-linejoin="round">
<polyline points="191.8,328.5 195.5,332 191.8,335.5" stroke="#c9cdd4" stroke-width="1.2"/>
<polyline points="191.8,393.1 195.5,396.6 191.8,400.1" stroke="#c9cdd4" stroke-width="1.2"/>
<rect x="171.8" y="341.7" width="12.5" height="12.5" rx="1.8" stroke="#e5e7eb" stroke-width="1.5"/>
<g transform="translate(170,405) scale(0.6)" stroke="#e5e7eb" stroke-width="2.3"><path d="M21 8a2 2 0 0 0-1-1.73l-7-4a2 2 0 0 0-2 0l-7 4A2 2 0 0 0 3 8v8a2 2 0 0 0 1 1.73l7 4a2 2 0 0 0 2 0l7-4A2 2 0 0 0 21 16Z"/><path d="m3.3 7 8.7 5 8.7-5"/><path d="M12 22V12"/></g>
<g stroke="#e5e7eb" stroke-width="1.4"><rect x="171.5" y="448.5" width="13" height="13" rx="2"/><path d="M171.5,452.8 H184.5 M171.5,457.2 H184.5 M175.8,448.5 V461.5 M180.2,448.5 V461.5"/></g>
<g stroke="#e5e7eb" stroke-width="1.4"><path d="M172,490.5 H184 M172,488.5 V492.5 M184,488.5 V492.5"/><rect x="171.5" y="494.5" width="13" height="5.5" rx="1"/><path d="M175,494.5 v2.2 M178,494.5 v2.2 M181,494.5 v2.2"/></g>
<g transform="translate(170.5,553.5) scale(0.625)" stroke="#e5e7eb" stroke-width="2.2"><path d="M7.9 20A9 9 0 1 0 4 16.1L2 22Z"/></g>
<path d="M174.5,598.5 L182,606 M174.5,598.5 V604.5 M174.5,598.5 H180.5" stroke="#e5e7eb" stroke-width="1.5"/>
<g transform="translate(170.5,638) scale(0.625)" stroke="#e5e7eb" stroke-width="2.2"><path d="M15 2H6a2 2 0 0 0-2 2v16a2 2 0 0 0 2 2h12a2 2 0 0 0 2-2V7Z"/><path d="M14 2v4a2 2 0 0 0 2 2h4"/><path d="M10 9H8"/><path d="M16 13H8"/><path d="M16 17H8"/></g>
</svg>
<div class="abs" style="left:905px;top:736px;width:26px;height:182px;background:#2b2c2f"></div>
<div class="abs" style="left:905px;top:761.5px;width:26px;height:1px;background:#4b4d52"></div><div class="abs" style="left:905px;top:787.5px;width:26px;height:1px;background:#4b4d52"></div><div class="abs" style="left:905px;top:813.5px;width:26px;height:1px;background:#4b4d52"></div><div class="abs" style="left:905px;top:839.5px;width:26px;height:1px;background:#4b4d52"></div><div class="abs" style="left:905px;top:865.5px;width:26px;height:1px;background:#4b4d52"></div><div class="abs" style="left:905px;top:891.5px;width:26px;height:1px;background:#4b4d52"></div>
<svg class="abs" style="left:0;top:0" width="1411" height="939" fill="none">
<path d="M912,748.8 H924 M918,742.8 V754.8" stroke="#f3f4f6" stroke-width="1.8"/>
<path d="M912,774.5 H924" stroke="#f3f4f6" stroke-width="1.6"/>
<path d="M912.5,803 V799 Q912.5,797 914.5,797 H917 M919,797 H921.5 Q923.5,797 923.5,799 V803 M923.5,805 V807.5 Q923.5,809.5 921.5,809.5 H919 M917,809.5 H914.5 Q912.5,809.5 912.5,807.5 V805" stroke="#f3f4f6" stroke-width="1.5"/>
<rect x="913" y="827" width="10" height="7.5" rx="1.2" fill="#f3f4f6"/><path d="M919.5,827 V824.5 Q919.5,821.5 922,821.5 Q924,821.5 924.5,823.5" stroke="#f3f4f6" stroke-width="1.4"/><circle cx="918" cy="830.8" r="1.2" fill="#2b2c2f"/>
<rect x="912.5" y="846.5" width="11" height="11" rx="1.2" fill="#f3f4f6"/>
<path d="M918.5,872.5 C924,872 925,877 923,880 C921,882.5 919,881 917.5,883.5 C913,884 911,879 912.5,876 C913.5,873.5 916,872.7 918.5,872.5Z" fill="#f3f4f6"/>
<g fill="#f3f4f6"><rect x="912.5" y="898.5" width="5" height="5"/><rect x="918.5" y="898.5" width="5" height="5"/><rect x="912.5" y="904.5" width="5" height="5"/><rect x="918.5" y="904.5" width="5" height="5"/></g>
</svg>
</div></div>
<div id="right" class="abs"><div id="righti" class="abs">
<svg class="abs" style="left:0;top:0" width="1411" height="939" fill="none" stroke-linecap="round" stroke-linejoin="round">
<g transform="translate(966.5,62.5) scale(0.625)" stroke="#cdd1d8" stroke-width="2.2"><path d="M21 15a2 2 0 0 1-2 2H7l-4 4V5a2 2 0 0 1 2-2h14a2 2 0 0 1 2 2z"/></g>
<g transform="translate(1055,62.5) scale(0.625)" stroke="#cdd1d8" stroke-width="2.2"><polyline points="10 15 15 20 20 15"/><path d="M4 4h7a4 4 0 0 1 4 4v12"/></g>
<g transform="translate(1189,62.5) scale(0.625)" stroke="#cdd1d8" stroke-width="2.2"><circle cx="13.5" cy="6.5" r=".5" fill="#cdd1d8"/><circle cx="17.5" cy="10.5" r=".5" fill="#cdd1d8"/><circle cx="8.5" cy="7.5" r=".5" fill="#cdd1d8"/><circle cx="6.5" cy="12.5" r=".5" fill="#cdd1d8"/><path d="M12 2C6.5 2 2 6.5 2 12s4.5 10 10 10c.926 0 1.648-.746 1.648-1.688 0-.437-.18-.835-.437-1.125-.29-.289-.438-.652-.438-1.125a1.64 1.64 0 0 1 1.668-1.668h1.996c3.051 0 5.555-2.503 5.555-5.554C21.965 6.012 17.461 2 12 2z"/></g>
<path d="M1387.3,66.3 L1396.7,75.7 M1396.7,66.3 L1387.3,75.7" stroke="#cdd1d8" stroke-width="1.5"/>
<line x1="955" y1="88.5" x2="1411" y2="88.5" stroke="#434a57" stroke-width="1"/>
<rect x="955" y="87" width="80" height="2" fill="#3b82f6" stroke="none"/>
<rect x="1338.5" y="94.5" width="26" height="26" rx="5" stroke="#434a57" stroke-width="1"/>
<g transform="translate(1344,100) scale(0.625)" stroke="#cdd1d8" stroke-width="2.2"><path d="M21 15a2 2 0 0 1-2 2H7l-4 4V5a2 2 0 0 1 2-2h14a2 2 0 0 1 2 2z"/></g>
<line x1="1373.5" y1="99" x2="1373.5" y2="115" stroke="#434a57"/>
<path d="M1390,107 H1401 M1395.5,101.5 V112.5" stroke="#d1d5db" stroke-width="1.5"/>
<line x1="955" y1="124.5" x2="1411" y2="124.5" stroke="#434a57" stroke-width="1"/>
<line x1="975.5" y1="125" x2="975.5" y2="205.5" stroke="#434a57" stroke-width="1"/>
<g stroke="#3b82f6" stroke-width="1.3"><rect x="1018.5" y="129.5" width="11.5" height="11.5" rx="1.5"/><rect x="1021.5" y="132.5" width="5.5" height="5.5" rx="0.5"/>
<path d="M1021.5,127.5 v1.5 M1024.2,127.5 v1.5 M1027,127.5 v1.5 M1021.5,141.5 v1.5 M1024.2,141.5 v1.5 M1027,141.5 v1.5 M1016.5,132.5 h1.5 M1016.5,135.2 h1.5 M1016.5,138 h1.5 M1030.5,132.5 h1.5 M1030.5,135.2 h1.5 M1030.5,138 h1.5"/></g>
<g stroke="#3b82f6" stroke-width="1.3" transform="translate(0,31)"><rect x="1018.5" y="129.5" width="11.5" height="11.5" rx="1.5"/><rect x="1021.5" y="132.5" width="5.5" height="5.5" rx="0.5"/>
<path d="M1021.5,127.5 v1.5 M1024.2,127.5 v1.5 M1027,127.5 v1.5 M1021.5,141.5 v1.5 M1024.2,141.5 v1.5 M1027,141.5 v1.5 M1016.5,132.5 h1.5 M1016.5,135.2 h1.5 M1016.5,138 h1.5 M1030.5,132.5 h1.5 M1030.5,135.2 h1.5 M1030.5,138 h1.5"/></g>
</svg>
<div class="t" style="left:987.00px;top:62.80px;font-size:15px;font-weight:700;color:#cdd1d8;font-family:'Liberation Sans',sans-serif;transform:scaleX(0.8749);">CHAT</div>
<div class="t" style="left:1075.00px;top:62.80px;font-size:15px;font-weight:700;color:#cdd1d8;font-family:'Liberation Sans',sans-serif;transform:scaleX(0.9156);">Edge Details</div>
<div class="t" style="left:1209.70px;top:62.80px;font-size:15px;font-weight:700;color:#cdd1d8;font-family:'Liberation Sans',sans-serif;transform:scaleX(0.9259);">Styles</div>
<div class="t" style="left:1040.50px;top:130.82px;font-size:14.5px;font-weight:400;color:#a9aeb7;font-family:'Liberation Sans',sans-serif;">Updated diagram with summary/mdContent updates</div>
<div class="t" style="left:1040.50px;top:161.72px;font-size:14.5px;font-weight:400;color:#a9aeb7;font-family:'Liberation Sans',sans-serif;transform:scaleX(0.9838);">Board "Customer Order Failure Investigation Flow"</div>
<div class="t" style="left:1040.50px;top:183.72px;font-size:14.5px;font-weight:400;color:#a9aeb7;font-family:'Liberation Sans',sans-serif;transform:scaleX(0.9951);">generation completed</div>
<div class="abs" style="left:963px;top:227px;width:460px;height:600px;border-radius:9px;background:#2f333c"></div>
<div class="abs" style="left:979.5px;top:235.5px;width:422.5px;height:600px;border-radius:8px;background:#2e323b;border:1px solid #4a5161"></div>
<div class="t" style="left:996.40px;top:252.92px;font-size:14.5px;font-weight:400;color:#c4c8d0;font-family:'Liberation Sans',sans-serif;transform:scaleX(1.0079);">Customer Order Failure Investigation Flow</div>
<svg class="abs" style="left:0;top:0" width="1411" height="939" fill="none" stroke-linecap="round" stroke-linejoin="round">
<path d="M1310.5,260 H1323.5 M1318,254.5 L1323.5,260 L1318,265.5" stroke="#e5e7eb" stroke-width="1.5"/>
<g transform="translate(1356,252) scale(0.667)" stroke="#e5e7eb" stroke-width="2.1"><path d="M15 3h6v6"/><path d="M10 14 21 3"/><path d="M18 13v6a2 2 0 0 1-2 2H5a2 2 0 0 1-2-2V8a2 2 0 0 1 2-2h6"/></g>
<line x1="980" y1="284.5" x2="1401" y2="284.5" stroke="#4a5161"/>
</svg>
<div class="abs" style="left:980px;top:285px;width:421px;height:283px;background:#111827"></div>
<div class="abs" style="left:987.3px;top:292.6px;width:406.2px;height:267.3px;background:#141414"></div>
<div class="abs" style="left:980px;top:568px;width:421px;height:230px;background:#212937"></div>
<svg class="abs" style="left:0;top:0" width="1411" height="939">
<path d="M1146.6,292.7 V324" fill="none" stroke="#3b82f6" stroke-width="1.3"/><path d="M1143.3999999999999,321.0 L1146.6,324.5 L1149.8,321.0" fill="none" stroke="#3b82f6" stroke-width="1.2"/>
<path d="M1146.9,365.6 C1146,380 1130,390 1106,400 C1085,409 1060,415 1046.8,425.5 C1038,433 1036.2,438 1036.2,443" fill="none" stroke="#3b82f6" stroke-width="1.3"/><path d="M1033.0,440.5 L1036.2,444 L1039.4,440.5" fill="none" stroke="#3b82f6" stroke-width="1.2"/>
<path d="M1146.9,365.6 C1145,390 1138,415 1124,437 C1112,455 1103,480 1101.7,504" fill="none" stroke="#3b82f6" stroke-width="1.3"/><path d="M1098.5,501.5 L1101.7,505 L1104.9,501.5" fill="none" stroke="#3b82f6" stroke-width="1.2"/>
<path d="M1173,365.6 C1172,390 1162,410 1161,428 C1160.5,435 1160.2,440 1160.2,443.5" fill="none" stroke="#3b82f6" stroke-width="1.3"/><path d="M1157.0,441.0 L1160.2,444.5 L1163.4,441.0" fill="none" stroke="#3b82f6" stroke-width="1.2"/>
<path d="M1173,365.6 C1175,400 1195,425 1212,448 C1226,468 1231,485 1231,502" fill="none" stroke="#3b82f6" stroke-width="1.3"/><path d="M1227.8,499.5 L1231,503 L1234.2,499.5" fill="none" stroke="#3b82f6" stroke-width="1.2"/>
<path d="M1200,365.6 C1202,385 1215,395 1235,406 C1258,418 1266.6,430 1266.6,442" fill="none" stroke="#3b82f6" stroke-width="1.3"/><path d="M1263.3999999999999,439.5 L1266.6,443 L1269.8,439.5" fill="none" stroke="#3b82f6" stroke-width="1.2"/>
<rect x="1118.5" y="325.8" width="106.6" height="39.2" fill="#175a72" stroke="#1aa3c4" stroke-width="1.5"/>
<g fill="none" stroke="#d6eef5" stroke-width="0.9"><rect x="1125.6" y="334.5" width="7.3" height="5.5" rx="1"/><path d="M1129.2,334.5 V332.5"/></g>
<text transform="translate(1137.00,338.20) scale(0.9688,1)" font-family="Liberation Sans" font-size="5.6" font-weight="700" fill="#d6eef5" >ai_agent</text>
<text transform="translate(1125.30,351.80) scale(1.1550,1)" font-family="Liberation Serif" font-size="9.8" font-weight="700" fill="#e6f4f8" >Order Investigation</text>
<text transform="translate(1151.30,363.70) scale(1.1536,1)" font-family="Liberation Serif" font-size="9.8" font-weight="700" fill="#e6f4f8" >Platform</text>
<rect x="1115.1" y="296.0" width="63.6" height="11.6" rx="3.5" fill="#2b2f38"/><text transform="translate(1121.60,304.10) scale(0.9336,1)" font-family="Liberation Sans" font-size="6.6" font-weight="400" fill="#d9dce1" >customer-service-...</text>
<rect x="1060.1" y="399.8" width="63.4" height="10.8" rx="3.5" fill="#2b2f38"/><text transform="translate(1066.60,407.50) scale(0.8693,1)" font-family="Liberation Sans" font-size="6.6" font-weight="400" fill="#d9dce1" >order-investigation-...</text>
<rect x="1135.2" y="399.8" width="63.1" height="10.8" rx="3.5" fill="#2b2f38"/><text transform="translate(1141.70,407.50) scale(0.8644,1)" font-family="Liberation Sans" font-size="6.6" font-weight="400" fill="#d9dce1" >order-investigation-...</text>
<rect x="1201.6" y="399.8" width="63.1" height="10.8" rx="3.5" fill="#2b2f38"/><text transform="translate(1208.10,407.50) scale(0.8644,1)" font-family="Liberation Sans" font-size="6.6" font-weight="400" fill="#d9dce1" >order-investigation-...</text>
<rect x="1092.4" y="429.7" width="63.1" height="11.0" rx="3.5" fill="#2b2f38"/><text transform="translate(1098.90,437.50) scale(0.8644,1)" font-family="Liberation Sans" font-size="6.6" font-weight="400" fill="#d9dce1" >order-investigation-...</text>
<rect x="1170.3" y="429.4" width="63.1" height="11.0" rx="3.5" fill="#2b2f38"/><text transform="translate(1176.80,437.20) scale(0.8644,1)" font-family="Liberation Sans" font-size="6.6" font-weight="400" fill="#d9dce1" >order-investigation-...</text>
<polygon points="1017.5,469.35 1021.0,444.9 1086.1,444.9 1089.6,469.35 1086.1,493.8 1021.0,493.8" fill="#6b21a8" stroke="#a855f7" stroke-width="1"/>
<g fill="none" stroke="#e9d5ff" stroke-width="0.9"><rect x="1024.5" y="452.5" width="7.7" height="3.9" rx="0.7"/><rect x="1024.5" y="457.6" width="7.7" height="3.9" rx="0.7"/></g><text transform="translate(1037.00,458.80) scale(0.7764,1)" font-family="Liberation Sans" font-size="5.6" font-weight="700" fill="#f3e8ff" >service</text>
<text transform="translate(1019.90,469.20) scale(0.9698,1)" font-family="Liberation Sans" font-size="6.6" font-weight="700" fill="#f3e8ff" >Inventory Management</text><text transform="translate(1042.60,477.00) scale(0.8874,1)" font-family="Liberation Sans" font-size="6.6" font-weight="700" fill="#f3e8ff" >Systems</text>
<path d="M1127.6,482.8 C1119.4,481.0 1120.1,471.1 1132.0,470.5 C1133.5,464.1 1148.4,460.6 1156.6,464.7 C1160.3,455.9 1182.6,454.7 1185.6,464.7 C1198.2,464.7 1198.2,475.8 1190.8,476.9 C1192.3,483.9 1184.1,486.0 1176.7,483.9 C1166.2,486.3 1148.4,485.7 1141.7,483.6 C1135.0,485.1 1129.0,484.5 1127.6,482.8 Z" fill="#6b21a8" stroke="#a855f7" stroke-width="1"/>
<text transform="translate(1128.20,473.00) scale(0.9400,1)" font-family="Liberation Sans" font-size="6.6" font-weight="700" fill="#f3e8ff" >Shipping &amp; Logistics</text><text transform="translate(1147.30,480.90) scale(0.8800,1)" font-family="Liberation Sans" font-size="6.6" font-weight="700" fill="#f3e8ff" >Systems</text>
<polygon points="1246.7,468.5 1250.2,444.2 1315.0,444.2 1318.5,468.5 1315.0,492.8 1250.2,492.8" fill="#6b21a8" stroke="#a855f7" stroke-width="1"/>
<g fill="none" stroke="#e9d5ff" stroke-width="0.9"><rect x="1254.5" y="451.5" width="8.0" height="3.9" rx="0.7"/><rect x="1254.5" y="456.6" width="8.0" height="3.9" rx="0.7"/></g><text transform="translate(1266.00,458.00) scale(0.7764,1)" font-family="Liberation Sans" font-size="5.6" font-weight="700" fill="#f3e8ff" >service</text>
<text transform="translate(1252.60,468.70) scale(0.9300,1)" font-family="Liberation Sans" font-size="6.6" font-weight="700" fill="#f3e8ff" >Customer &amp; Financial</text><text transform="translate(1272.40,476.00) scale(0.9058,1)" font-family="Liberation Sans" font-size="6.6" font-weight="700" fill="#f3e8ff" >Systems</text>
<polygon points="1082.6,529.3 1086.1,505 1150.1,505 1153.6,529.3 1150.1,553.6 1086.1,553.6" fill="#6b21a8" stroke="#a855f7" stroke-width="1"/>
<g fill="none" stroke="#e9d5ff" stroke-width="0.9"><rect x="1090.0" y="512.5" width="8.0" height="4.4" rx="0.7"/><rect x="1090.0" y="518.1" width="8.0" height="4.4" rx="0.7"/></g><text transform="translate(1101.00,519.00) scale(0.8282,1)" font-family="Liberation Sans" font-size="5.6" font-weight="700" fill="#f3e8ff" >service</text>
<text transform="translate(1090.00,530.00) scale(0.9807,1)" font-family="Liberation Sans" font-size="6.6" font-weight="700" fill="#f3e8ff" >Order Management</text><text transform="translate(1108.70,537.70) scale(0.8980,1)" font-family="Liberation Sans" font-size="6.6" font-weight="700" fill="#f3e8ff" >System</text>
<path d="M1197.8,545.7 C1189.5,543.8 1190.3,532.9 1202.4,532.2 C1203.9,525.2 1219.0,521.3 1227.3,525.8 C1231.1,516.2 1253.7,514.9 1256.7,525.8 C1269.6,525.8 1269.6,538.0 1262.0,539.3 C1263.5,547.0 1255.2,549.3 1247.7,547.0 C1237.1,549.6 1219.0,548.9 1212.2,546.7 C1205.4,548.3 1199.3,547.7 1197.8,545.7 Z" fill="#6b21a8" stroke="#a855f7" stroke-width="1"/>
<text transform="translate(1199.30,535.40) scale(0.9285,1)" font-family="Liberation Sans" font-size="6.6" font-weight="700" fill="#f3e8ff" >Payment Processing</text><text transform="translate(1218.00,543.10) scale(0.8837,1)" font-family="Liberation Sans" font-size="6.6" font-weight="700" fill="#f3e8ff" >Systems</text>
</svg>
<div class="t" style="left:996.40px;top:591.03px;font-size:16.5px;font-weight:700;color:#eceef1;font-family:'Liberation Sans',sans-serif;transform:scaleX(1.0070);">Investigation Workflow</div>
<div class="t" style="left:996.40px;top:622.92px;font-size:14.5px;font-weight:400;color:#d5d9df;font-family:'Liberation Sans',sans-serif;transform:scaleX(0.9888);">When a customer calls about a failed order, the customer</div>
<div class="t" style="left:996.40px;top:642.92px;font-size:14.5px;font-weight:400;color:#d5d9df;font-family:'Liberation Sans',sans-serif;">service agent follows a systematic investigation path across</div>
<div class="t" style="left:996.40px;top:662.92px;font-size:14.5px;font-weight:400;color:#d5d9df;font-family:'Liberation Sans',sans-serif;transform:scaleX(1.0056);">the distributed order management platform:</div>
<div class="t" style="left:996.40px;top:696.92px;font-size:14.5px;font-weight:700;color:#eceef1;font-family:'Liberation Sans',sans-serif;transform:scaleX(0.9951);">What the Agent Checks</div>
<div class="t" style="left:996.40px;top:720.52px;font-size:14.5px;font-weight:700;color:#eceef1;font-family:'Liberation Sans',sans-serif;transform:scaleX(0.9455);">1. Order State &amp; Lifecycle</div>
<div class="abs" style="left:1008.5px;top:755.5px;width:4.5px;height:4.5px;border-radius:50%;background:#d5d9df"></div>
<div class="t" style="left:1023.80px;top:751.22px;font-size:14.5px;font-weight:700;color:#eceef1;font-family:'Liberation Sans',sans-serif;transform:scaleX(0.9514);">Order Management System:</div>
<div class="t" style="left:1215.00px;top:751.22px;font-size:14.5px;font-weight:400;color:#d5d9df;font-family:'Liberation Sans',sans-serif;transform:scaleX(0.9943);">Check order status,</div>
<div class="t" style="left:1023.80px;top:771.22px;font-size:14.5px;font-weight:400;color:#d5d9df;font-family:'Liberation Sans',sans-serif;transform:scaleX(1.0071);">submission timestamp, line items, and fulfillment state</div>
<div class="abs" style="left:955px;top:791px;width:456px;height:148px;background:#262a33;border-top:1px solid #434a57"></div>
<div class="abs" style="left:963px;top:800.2px;width:443px;height:132.5px;border-radius:8px;border:1px solid #34507e;background:#262a33"></div>
<div class="abs" style="left:964px;top:892px;width:441px;height:1px;background:#3d4350"></div>
<div class="t" style="left:976.00px;top:817.92px;font-size:14.5px;font-weight:400;color:#979ca6;font-family:'Liberation Sans',sans-serif;transform:scaleX(0.9522);">Type your message...</div>
<div class="abs" style="left:1012.2px;top:899.7px;width:49.5px;height:27px;border-radius:7px;background:#172254;border:1.5px solid #2b4fc0"></div>
<div class="abs" style="left:1106.3px;top:901.4px;width:27.4px;height:23.6px;border-radius:5px;background:#6b3a12;border:1px solid #7c4518"></div>
<div class="abs" style="left:1140.2px;top:901.4px;width:24.8px;height:23.6px;border-radius:5px;background:#7a2e12;border:1px solid #8a3a18"></div>
<div class="abs" style="left:1361.3px;top:897.5px;width:31.7px;height:31.3px;border-radius:6px;background:#3b82f6"></div>
<svg class="abs" style="left:0;top:0" width="1411" height="939" fill="none" stroke-linecap="round" stroke-linejoin="round">
<path d="M986.5,909 Q986.5,905.5 990,905.5 Q993.5,905.5 993.5,909 V916.5 Q993.5,920.5 990,920.5 Q986.5,920.5 986.5,916.5 Z" fill="#6b7280" stroke="#9ca3af" stroke-width="0.8"/><path d="M988.5,916 Q988.5,918 990,918 Q991.5,918 991.5,916" stroke="#d1d5db" stroke-width="0.8"/>
<g transform="translate(1022,906) scale(0.58)" stroke="#93bbfd" stroke-width="2.2"><path d="M13 7 8.7 2.7a2.41 2.41 0 0 0-3.4 0L2.7 5.3a2.41 2.41 0 0 0 0 3.4L7 13"/><path d="m8 6 2-2"/><path d="m18 16 2-2"/><path d="m17 11 4.3 4.3c.94.94.94 2.46 0 3.4l-2.6 2.6c-.94.94-2.46.94-3.4 0L11 17"/><path d="M21.174 6.812a1 1 0 0 0-3.986-3.987L3.842 16.174a2 2 0 0 0-.5.83l-1.321 4.352a.5.5 0 0 0 .623.622l4.353-1.32a2 2 0 0 0 .83-.497z"/><path d="m15 5 4 4"/></g>
<g stroke="#9ca3af" stroke-width="1.4"><path d="M1083.5,908.5 H1090 M1078,916.5 H1084.5"/><circle cx="1080.5" cy="908.5" r="2.2"/><circle cx="1087.5" cy="916.5" r="2.2"/></g>
<g transform="translate(1112,905.5) scale(0.6)" stroke="#f5b82e" stroke-width="2.2"><path d="M9.94 15.5A2 2 0 0 0 8.5 14.06l-6.14-1.58a.5.5 0 0 1 0-.96L8.5 9.94A2 2 0 0 0 9.94 8.5l1.58-6.14a.5.5 0 0 1 .96 0L14.06 8.5A2 2 0 0 0 15.5 9.94l6.14 1.58a.5.5 0 0 1 0 .96L15.5 14.06a2 2 0 0 0-1.44 1.44l-1.58 6.14a.5.5 0 0 1-.96 0z"/><path d="M20 3v4"/><path d="M22 5h-4"/></g>
<polyline points="1327,909.5 1332,914.5 1337,909.5" stroke="#e5e7eb" stroke-width="1.5"/>
<g transform="translate(1369,905) scale(0.667)" stroke="#ffffff" stroke-width="2"><path d="M14.536 21.686a.5.5 0 0 0 .937-.024l6.5-19a.496.496 0 0 0-.635-.635l-19 6.5a.5.5 0 0 0-.024.937l7.93 3.18a2 2 0 0 1 1.112 1.11z"/><path d="m21.854 2.147-10.94 10.939"/></g>
</svg>
<div class="t" style="left:1041.00px;top:906.29px;font-size:13px;font-weight:700;color:#93bbfd;font-family:'Liberation Sans',sans-serif;transform:scaleX(0.8316);">18</div>
<div class="t" style="left:1146.50px;top:906.49px;font-size:13px;font-weight:700;color:#fb923c;font-family:'Liberation Sans',sans-serif;transform:scaleX(0.8316);">17</div>
<div class="t" style="left:1221.60px;top:906.07px;font-size:13.5px;font-weight:700;color:#e5e7eb;font-family:'Liberation Sans',sans-serif;transform:scaleX(0.8763);">Claude Haiku 4.5</div>
</div></div>
<div class="abs" style="left:124.5px;top:489px;width:9.3px;height:15.8px;border-radius:4px;background:#4b5567"></div>
<div class="abs" style="left:126.9px;top:492.8px;width:1.6px;height:2px;background:#e5e7eb"></div>
<div class="abs" style="left:129.8px;top:492.8px;width:1.6px;height:2px;background:#e5e7eb"></div>
<div class="abs" style="left:126.9px;top:495.7px;width:1.6px;height:2px;background:#e5e7eb"></div>
<div class="abs" style="left:129.8px;top:495.7px;width:1.6px;height:2px;background:#e5e7eb"></div>
<div class="abs" style="left:126.9px;top:498.6px;width:1.6px;height:2px;background:#e5e7eb"></div>
<div class="abs" style="left:129.8px;top:498.6px;width:1.6px;height:2px;background:#e5e7eb"></div>
<div class="abs" style="left:948.2px;top:489px;width:11.5px;height:15.8px;border-radius:4px;background:#4b5567"></div>
<div class="abs" style="left:951.7px;top:492.8px;width:1.6px;height:2px;background:#e5e7eb"></div>
<div class="abs" style="left:954.7px;top:492.8px;width:1.6px;height:2px;background:#e5e7eb"></div>
<div class="abs" style="left:951.7px;top:495.7px;width:1.6px;height:2px;background:#e5e7eb"></div>
<div class="abs" style="left:954.7px;top:495.7px;width:1.6px;height:2px;background:#e5e7eb"></div>
<div class="abs" style="left:951.7px;top:498.6px;width:1.6px;height:2px;background:#e5e7eb"></div>
<div class="abs" style="left:954.7px;top:498.6px;width:1.6px;height:2px;background:#e5e7eb"></div>
</body></html>
